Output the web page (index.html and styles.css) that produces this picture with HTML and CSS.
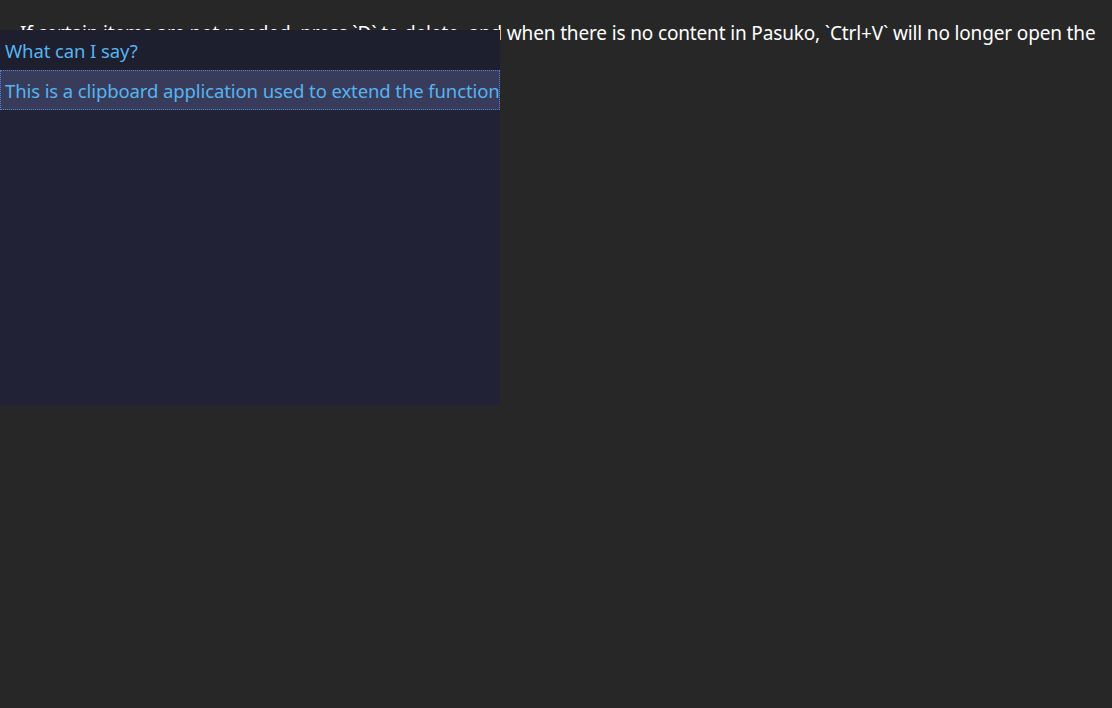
FILE: index.html
```html
<!DOCTYPE html>
<html>
<head>
<meta charset="utf-8">
<link rel="stylesheet" href="styles.css">
</head>
<body>
<p class="doc-line">If certain items are not needed, press `D` to delete, and when there is no content in Pasuko, `Ctrl+V` will no longer open the panel.</p>
<div class="popup">
  <div class="popup-item popup-item--header">What can I say?</div>
  <div class="popup-item popup-item--selected">This is a clipboard application used to extend the functionality of the system clipboard.</div>
</div>
</body>
</html>
```
FILE: styles.css
```css
html, body {
  margin: 0;
  padding: 0;
  background: #272727;
  height: 100%;
  overflow: hidden;
}
body {
  position: relative;
  font-family: "Noto Sans", "Open Sans", sans-serif;
}
.doc-line {
  margin: 0;
  padding: 20px 10px 0 20px;
  color: #ffffff;
  font-size: 19px;
  line-height: 26px;
  letter-spacing: -0.15px;
}
.popup {
  position: absolute;
  left: 0;
  top: 30px;
  width: 500px;
  height: 375px;
  background: #212235;
  display: flex;
  flex-direction: column;
  overflow: hidden;
}
.popup-item {
  height: 40px;
  flex: none;
  box-sizing: border-box;
  padding: 0 5px;
  display: flex;
  align-items: center;
  color: #56b4f0;
  font-size: 18.5px;
  letter-spacing: -0.1px;
  white-space: nowrap;
  overflow: hidden;
}
.popup-item--header {
  background: #1d1e2e;
}
.popup-item--selected {
  background: #383c5a;
  border: 1px dotted #4f86dc;
  padding-left: 4px;
}
```
